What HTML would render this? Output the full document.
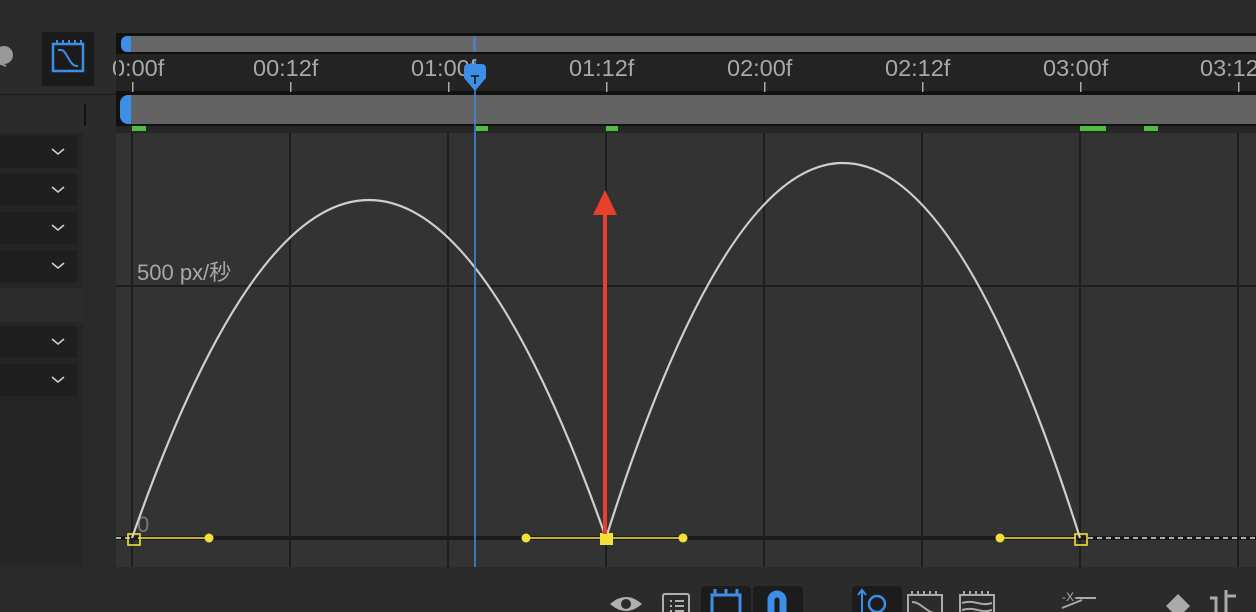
<!DOCTYPE html>
<html><head><meta charset="utf-8"><style>
html,body{margin:0;padding:0;width:1256px;height:612px;overflow:hidden;background:#2b2b2b;font-family:"Liberation Sans","Noto Sans CJK JP",sans-serif}
</style></head><body>
<svg width="1256" height="612" viewBox="0 0 1256 612" xmlns="http://www.w3.org/2000/svg" style="position:absolute;left:0;top:0">
<rect x="0" y="0" width="1256" height="612" fill="#2b2b2b"/>
<rect x="0" y="95" width="116" height="37" fill="#2b2b2b"/>
<rect x="0" y="94" width="116" height="1" fill="#1c1c1c"/>
<rect x="84" y="104" width="2" height="22" fill="#111"/>
<rect x="0" y="133" width="83" height="434" fill="#262626"/>
<rect x="83" y="133" width="33" height="479" fill="#2a2a2a"/>
<rect x="0" y="567" width="116" height="45" fill="#2a2a2a"/>
<g fill="#1f1f1f">
<rect x="0" y="136" width="77" height="32"/><rect x="0" y="174" width="77" height="32"/>
<rect x="0" y="212" width="77" height="32"/><rect x="0" y="250" width="77" height="32"/>
<rect x="0" y="326" width="77" height="32"/><rect x="0" y="364" width="77" height="32"/>
</g>
<rect x="0" y="288" width="83" height="34" fill="#2c2c2c"/>
<g stroke="#d0d0d0" stroke-width="1.6" fill="none">
<path d="M52 149l6 5 6-5"/><path d="M52 187l6 5 6-5"/><path d="M52 225l6 5 6-5"/>
<path d="M52 263l6 5 6-5"/><path d="M52 339l6 5 6-5"/><path d="M52 377l6 5 6-5"/>
</g>
<circle cx="4" cy="55" r="9" fill="#999"/><path d="M-4 62l10 4" stroke="#999" stroke-width="2"/>
<rect x="42" y="32" width="52" height="54" fill="#1b1b1b"/>
<rect x="53" y="44" width="30" height="27" fill="none" stroke="#3d8ee6" stroke-width="2.5"/>
<path d="M57 40v4M63 40v4M69 40v4M75 40v4M81 40v4" stroke="#3d8ee6" stroke-width="2"/>
<path d="M58 50h3c6 0 8 16 16 16h1" fill="none" stroke="#3d8ee6" stroke-width="2"/>
<rect x="116" y="33" width="1140" height="100" fill="#111"/>
<rect x="131" y="36" width="1125" height="16" fill="#666"/>
<path d="M131 36h-4a6 6 0 0 0 -6 6v4a6 6 0 0 0 6 6h4z" fill="#3d8ee6"/>
<rect x="473" y="36" width="3" height="16" fill="#3d8ee6" opacity="0.6"/>
<rect x="116" y="54" width="1140" height="37" fill="#232323"/>
<rect x="131" y="95" width="1125" height="29" fill="#636363"/>
<path d="M131 95h-3a8 8 0 0 0 -8 8v13a8 8 0 0 0 8 8h3z" fill="#3d8ee6"/>
<rect x="116" y="126" width="1140" height="7" fill="#262626"/>
<g fill="#4fbf3f">
<rect x="132" y="126" width="14" height="5"/><rect x="476" y="126" width="12" height="5"/>
<rect x="606" y="126" width="12" height="5"/><rect x="1080" y="126" width="26" height="5"/>
<rect x="1144" y="126" width="14" height="5"/>
</g>
<g font-size="23.5" fill="#a8a8a8">
<text x="112" y="76">0:00f</text><text x="253" y="76">00:12f</text><text x="411" y="76">01:00f</text>
<text x="569" y="76">01:12f</text><text x="727" y="76">02:00f</text><text x="885" y="76">02:12f</text>
<text x="1043" y="76">03:00f</text><text x="1200" y="76">03:12f</text>
</g>
<rect x="116" y="54" width="3" height="37" fill="#232323"/>
<g fill="#aaa"><rect x="132" y="82" width="1.5" height="10"/><rect x="290" y="82" width="1.5" height="10"/><rect x="448" y="82" width="1.5" height="10"/><rect x="606" y="82" width="1.5" height="10"/><rect x="764" y="82" width="1.5" height="10"/><rect x="922" y="82" width="1.5" height="10"/><rect x="1080" y="82" width="1.5" height="10"/><rect x="1238" y="82" width="1.5" height="10"/></g>
<rect x="116" y="133" width="1140" height="434" fill="#333"/>
<g stroke="#1e1e1e" stroke-width="2">
<path d="M132 133v434M290 133v434M448 133v434M606 133v434M764 133v434M922 133v434M1080 133v434M1238 133v434M116 286h1140"/>
</g>
<path d="M116 538h1140" stroke="#1b1b1b" stroke-width="4"/>
<text x="137" y="280" font-size="22" fill="#a8a8a8">500 px/秒</text>
<text x="137" y="532" font-size="22" fill="#777">0</text>
<path d="M132 538Q369 -138 606 538Q843 -212 1080 538" fill="none" stroke="#cfcfcf" stroke-width="2.2"/>
<path d="M1088 538h168" stroke="#ddd" stroke-width="1.5" stroke-dasharray="5 4"/>
<path d="M116 538h14" stroke="#ddd" stroke-width="1.5" stroke-dasharray="5 4"/>
<g stroke="#f4e03c" stroke-width="1.6" fill="none">
<path d="M138 538h71M526 538h154M1000 538h76"/>
<rect x="128" y="534" width="12" height="11"/><rect x="1075" y="534" width="12" height="11"/>
</g>
<rect x="600" y="533" width="13" height="12" fill="#f4e03c"/>
<g fill="#f4e03c"><circle cx="209" cy="538" r="4.5"/><circle cx="526" cy="538" r="4.5"/><circle cx="683" cy="538" r="4.5"/><circle cx="1000" cy="538" r="4.5"/></g>
<path d="M605 534V212" stroke="#e8402a" stroke-width="4"/>
<path d="M593 215L605 190L617 215z" fill="#e8402a"/>
<path d="M475 60v507" stroke="#3d8ee6" stroke-width="1.5"/>
<path d="M468 64h14a4 4 0 0 1 4 4v10l-11 13l-11 -13v-10a4 4 0 0 1 4 -4z" fill="#3d8ee6"/>
<path d="M471 76h8M475 76v8" stroke="#111" stroke-width="1.5"/>
<rect x="116" y="567" width="1140" height="45" fill="#2b2b2b"/>
<g fill="#b0b0b0">
<path d="M610 604q16-14 32 0q-16 14-32 0z"/><circle cx="626" cy="604" r="5" fill="#2b2b2b"/>
<rect x="663" y="594" width="26" height="22" rx="2" fill="none" stroke="#b0b0b0" stroke-width="2"/>
<path d="M670 601h2M675 601h9M670 606h2M675 606h9M670 611h2M675 611h9" stroke="#b0b0b0" stroke-width="2"/>
</g>
<rect x="701" y="586" width="50" height="30" rx="4" fill="#1c1c1c"/>
<rect x="753" y="586" width="50" height="30" rx="4" fill="#1c1c1c"/>
<rect x="712" y="595" width="28" height="20" fill="none" stroke="#3d8ee6" stroke-width="3"/>
<path d="M715 589v6M726 589v6M737 589v6" stroke="#3d8ee6" stroke-width="3"/>
<path d="M771 612v-12a6 6 0 0 1 12 0v12" fill="none" stroke="#3d8ee6" stroke-width="7"/>
<rect x="852" y="586" width="50" height="30" rx="4" fill="#1c1c1c"/>
<path d="M862 612v-22m-4 5l4-5 4 5" stroke="#3d8ee6" stroke-width="2" fill="none"/>
<circle cx="877" cy="604" r="8" fill="none" stroke="#3d8ee6" stroke-width="2.5"/>
<rect x="908" y="595" width="34" height="22" fill="none" stroke="#aaa" stroke-width="2"/>
<path d="M912 591v4M918 591v4M924 591v4M930 591v4M936 591v4M912 602c10 0 14 12 28 12" stroke="#aaa" stroke-width="2" fill="none"/>
<rect x="960" y="595" width="34" height="22" fill="none" stroke="#aaa" stroke-width="2"/>
<path d="M964 591v4M970 591v4M976 591v4M982 591v4M988 591v4M962 603c14-4 18 4 30 0M962 610c14-4 18 4 30 0" stroke="#aaa" stroke-width="2" fill="none"/>
<text x="1062" y="601" font-size="12" fill="#aaa">-X-</text>
<path d="M1076 598h20M1062 608l20-8" stroke="#aaa" stroke-width="2"/>
<path d="M1178 594l12 12-12 12-12-12z" fill="#aaa"/>
<path d="M1210 598h6v16M1226 590v22M1226 596h10" stroke="#aaa" stroke-width="3" fill="none"/>
</svg>
</body></html>
